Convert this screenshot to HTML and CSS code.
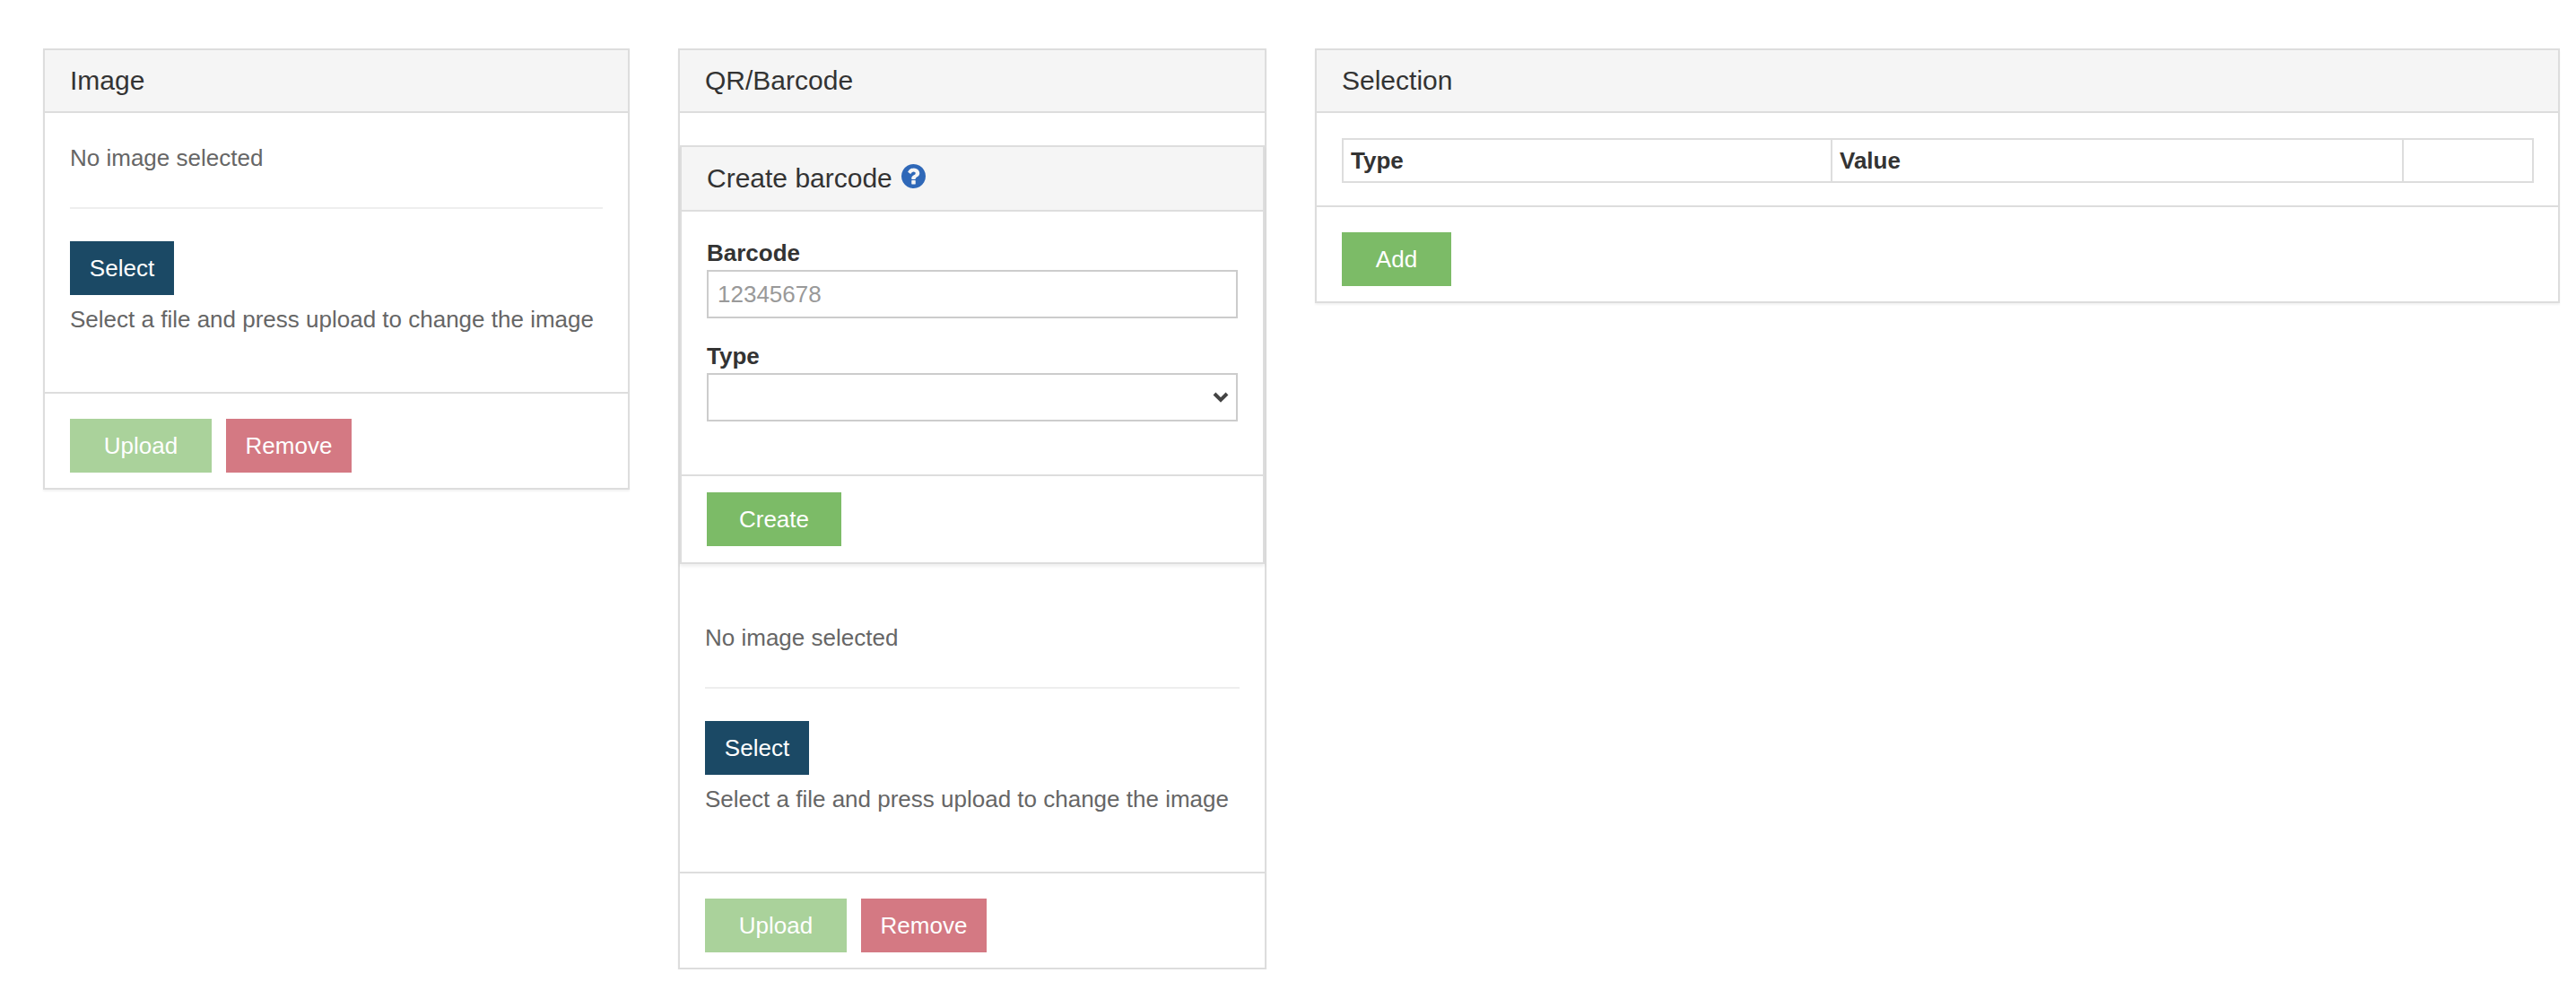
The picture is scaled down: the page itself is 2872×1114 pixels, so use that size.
FILE: index.html
```html
<!DOCTYPE html>
<html lang="en">
<head>
<meta charset="utf-8">
<title>Image, barcode and selection</title>
<link rel="stylesheet" href="styles.css">
</head>
<body>
<main class="layout">
  <section class="panel">
    <header class="panel-head"><h2 class="panel-title">Image</h2></header>
    <div class="panel-body image-body">
      <p class="muted no-image">No image selected</p>
      <hr class="rule">
      <button class="btn btn-navy" type="button">Select</button>
      <p class="muted help">Select a file and press upload to change the image</p>
    </div>
    <footer class="panel-foot">
      <button class="btn btn-upload" type="button">Upload</button>
      <button class="btn btn-remove" type="button">Remove</button>
    </footer>
  </section>

  <section class="panel">
    <header class="panel-head"><h2 class="panel-title">QR/Barcode</h2></header>
    <div class="barcode-wrap">
      <section class="panel panel-inner">
        <header class="panel-head head-inner">
          <h3 class="panel-title">Create barcode
            <svg class="help-icon" viewBox="128 128 1536 1536" aria-hidden="true"><path d="M1024 1376v-192q0-14-9-23t-23-9h-192q-14 0-23 9t-9 23v192q0 14 9 23t23 9h192q14 0 23-9t9-23zm256-672q0-88-55.5-163t-138.5-116-170-41q-243 0-371 213-15 24 8 42l132 100q7 6 19 6 16 0 25-12 53-68 86-92 34-24 86-24 48 0 85.5 26t37.5 59q0 38-20 61t-68 45q-63 28-115.5 86.5t-52.5 125.5v36q0 14 9 23t23 9h192q14 0 23-9t9-23q0-19 21.5-49.5t54.5-49.5q32-18 49-28.5t46-35 44.5-48 28-60.5 12.5-81zm384 192q0 209-103 385.5t-279.5 279.5-385.5 103-385.5-103-279.5-279.5-103-385.5 103-385.5 279.5-279.5 385.5-103 385.5 103 279.5 279.5 103 385.5z"/></svg>
          </h3>
        </header>
        <div class="form-body">
          <label class="field">
            <span class="field-label">Barcode</span>
            <input class="control" type="text" placeholder="12345678">
          </label>
          <label class="field">
            <span class="field-label">Type</span>
            <select class="control control-select"><option></option></select>
          </label>
        </div>
        <footer class="panel-foot foot-inner">
          <button class="btn btn-create" type="button">Create</button>
        </footer>
      </section>
    </div>
    <div class="panel-body image-body image-body-lower">
      <p class="muted no-image">No image selected</p>
      <hr class="rule">
      <button class="btn btn-navy" type="button">Select</button>
      <p class="muted help">Select a file and press upload to change the image</p>
    </div>
    <footer class="panel-foot">
      <button class="btn btn-upload" type="button">Upload</button>
      <button class="btn btn-remove" type="button">Remove</button>
    </footer>
  </section>

  <section class="panel">
    <header class="panel-head"><h2 class="panel-title">Selection</h2></header>
    <div class="panel-body table-body">
      <table class="sel-table">
        <thead>
          <tr><th class="col-type">Type</th><th class="col-value">Value</th><th class="col-act"></th></tr>
        </thead>
      </table>
    </div>
    <footer class="panel-foot">
      <button class="btn btn-add" type="button">Add</button>
    </footer>
  </section>
</main>
</body>
</html>
```

FILE: styles.css
```css
* { box-sizing: border-box; }

html, body { margin: 0; background: #fff; }

body {
  font-family: "Liberation Sans", Arial, sans-serif;
  font-size: 26px;
  color: #333;
}

.layout {
  display: grid;
  grid-template-columns: 654px 656px 1388px;
  column-gap: 54px;
  align-items: start;
  padding: 54px 18px 0 48px;
}

.panel {
  border: 2px solid #ddd;
  background: #fff;
  box-shadow: 0 2px 2px rgba(0, 0, 0, .05);
}

.panel-head {
  height: 70px;
  padding: 0 28px;
  display: flex;
  align-items: center;
  background: #f5f5f5;
  border-bottom: 2px solid #ddd;
}

.panel-title {
  margin: 0;
  font-size: 30px;
  font-weight: 400;
  color: #333;
  line-height: 36px;
}

.panel-body { padding: 0 28px; }

.image-body { height: 311px; padding-top: 32px; }

.image-body-lower { height: 343px; padding-top: 64px; }

.muted { margin: 0; color: #666; line-height: 36px; }

.no-image { height: 36px; }

.rule {
  margin: 0;
  height: 2px;
  border: 0;
  background: #eee;
  margin-top: 37px;
  margin-bottom: 36px;
}

.help { margin-top: 9px; }

.panel-foot {
  padding: 28px 28px 17px;
  border-top: 2px solid #ddd;
  display: flex;
  gap: 16px;
}

.btn {
  height: 60px;
  padding: 0 22px;
  border: 0;
  border-radius: 0;
  color: #fff;
  font: inherit;
  font-size: 26px;
  display: block;
}

.btn-navy { background: #1b4965; width: 116px; padding: 0; }
.btn-upload { background: #aad29b; width: 158px; padding: 0; }
.btn-remove { background: #d47983; width: 140px; padding: 0; }
.btn-create { background: #7cbb67; width: 150px; padding: 0; }
.btn-add { background: #7cbb67; width: 122px; padding: 0; }

.barcode-wrap { padding-top: 36px; }

.panel-inner {
  margin: 0;
  box-shadow: 0 3px 3px rgba(0, 0, 0, .06);
}

.head-inner { height: 72px; }

.help-icon {
  width: 27px;
  height: 27px;
  fill: #2f68b8;
  vertical-align: -1px;
  margin-left: 2px;
}

.form-body {
  height: 293px;
  padding: 28px 28px 0;
  display: flex;
  flex-direction: column;
  gap: 24px;
}

.field { display: block; }

.field-label {
  display: block;
  height: 37px;
  font-weight: 700;
  line-height: 36px;
  color: #333;
}

.control {
  display: block;
  width: 592px;
  height: 54px;
  padding: 0 10px;
  border: 2px solid #ccc;
  border-radius: 0;
  background: #fff;
  font: inherit;
  color: #333;
}

.control::placeholder { color: #999; opacity: 1; }

.control-select {
  appearance: none;
  background-image: url("data:image/svg+xml,%3Csvg xmlns='http://www.w3.org/2000/svg' viewBox='0 0 18 12'%3E%3Cpath d='M2 2l7 7 7-7' fill='none' stroke='%23444' stroke-width='4'/%3E%3C/svg%3E");
  background-repeat: no-repeat;
  background-position: right 8px center;
  background-size: 18px 12px;
}

.foot-inner { padding: 18px 28px 18px; }

.table-body { height: 103px; padding-top: 28px; }

.sel-table {
  width: 1329px;
  height: 50px;
  border-collapse: collapse;
  table-layout: fixed;
}

.sel-table th {
  border: 2px solid #ddd;
  padding: 0 8px;
  font-size: 26px;
  font-weight: 700;
  text-align: left;
  color: #333;
}

.col-type { width: 545px; }
.col-act { width: 145px; }
```
